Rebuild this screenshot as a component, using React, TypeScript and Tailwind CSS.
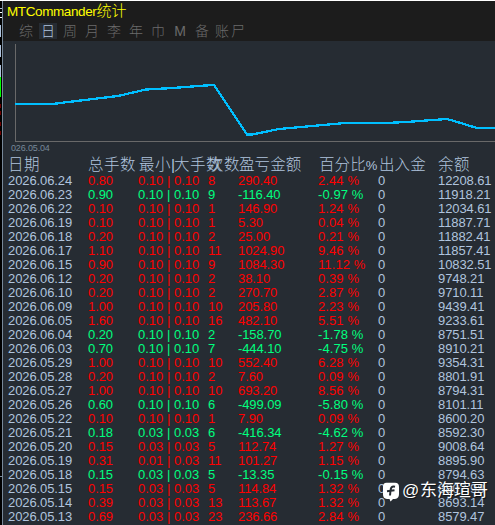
const rows: string[][] = [
  ["2026.06.24", "0.80", "0.10", "0.10", "8", "290.40", "2.44", "12208.61"],
  ["2026.06.23", "0.90", "0.10", "0.10", "9", "-116.40", "-0.97", "11918.21"],
  ["2026.06.22", "0.10", "0.10", "0.10", "1", "146.90", "1.24", "12034.61"],
  ["2026.06.19", "0.10", "0.10", "0.10", "1", "5.30", "0.04", "11887.71"],
  ["2026.06.18", "0.20", "0.10", "0.10", "2", "25.00", "0.21", "11882.41"],
  ["2026.06.17", "1.10", "0.10", "0.10", "11", "1024.90", "9.46", "11857.41"],
  ["2026.06.15", "0.90", "0.10", "0.10", "9", "1084.30", "11.12", "10832.51"],
  ["2026.06.12", "0.20", "0.10", "0.10", "2", "38.10", "0.39", "9748.21"],
  ["2026.06.10", "0.20", "0.10", "0.10", "2", "270.70", "2.87", "9710.11"],
  ["2026.06.09", "1.00", "0.10", "0.10", "10", "205.80", "2.23", "9439.41"],
  ["2026.06.05", "1.60", "0.10", "0.10", "16", "482.10", "5.51", "9233.61"],
  ["2026.06.04", "0.20", "0.10", "0.10", "2", "-158.70", "-1.78", "8751.51"],
  ["2026.06.03", "0.70", "0.10", "0.10", "7", "-444.10", "-4.75", "8910.21"],
  ["2026.05.29", "1.00", "0.10", "0.10", "10", "552.40", "6.28", "9354.31"],
  ["2026.05.28", "0.20", "0.10", "0.10", "2", "7.60", "0.09", "8801.91"],
  ["2026.05.27", "1.00", "0.10", "0.10", "10", "693.20", "8.56", "8794.31"],
  ["2026.05.26", "0.60", "0.10", "0.10", "6", "-499.09", "-5.80", "8101.11"],
  ["2026.05.22", "0.10", "0.10", "0.10", "1", "7.90", "0.09", "8600.20"],
  ["2026.05.21", "0.18", "0.03", "0.03", "6", "-416.34", "-4.62", "8592.30"],
  ["2026.05.20", "0.15", "0.03", "0.03", "5", "112.74", "1.27", "9008.64"],
  ["2026.05.19", "0.31", "0.01", "0.03", "11", "101.27", "1.15", "8895.90"],
  ["2026.05.18", "0.15", "0.03", "0.03", "5", "-13.35", "-0.15", "8794.63"],
  ["2026.05.15", "0.15", "0.03", "0.03", "5", "114.84", "1.32", "8807.98"],
  ["2026.05.14", "0.39", "0.03", "0.03", "13", "113.67", "1.32", "8693.14"],
  ["2026.05.13", "0.69", "0.03", "0.03", "23", "236.66", "2.84", "8579.47"],
];

const columns = "grid grid-cols-[80px_50px_70px_30px_80px_60px_60px_57px] whitespace-nowrap";

function Toolbar() {
  const tabs = ["综", "日", "周", "月", "李", "年", "巾", "M", "备"];
  return (
    <div className="flex h-4 w-[243px] pl-[13px] text-[14px] leading-4 text-[#6b6b6b]">
      {tabs.map((tab) => (
        <span
          key={tab}
          className={
            tab === "日"
              ? "mr-1 h-4 w-[18px] shrink-0 bg-[#262c33] text-center text-[#b0c4de]"
              : "mr-1 w-[18px] shrink-0 text-center"
          }
        >
          {tab}
        </span>
      ))}
      <span className="shrink-0 tracking-[2px]">账尸</span>
    </div>
  );
}

function Chart() {
  return (
    <svg className="block h-[101px] w-[491px] shrink-0" viewBox="4 41 491 101" shapeRendering="crispEdges">
      <path d="M15.5 44V142M15 141.5H495" fill="none" stroke="#696969" />
      <polyline
        points="15,104 53,104 60,103 118,96 146,89.5 173,88 205,85.5 214,85 247,134.5 252,134.5 279,129 345,123 386,123 406,122 447,119 454,121 477,128 495,128"
        fill="none"
        stroke="#00bfff"
        strokeWidth="2.3"
      />
    </svg>
  );
}

function Table() {
  return (
    <div className="pl-1 text-[13px] leading-[14px] tracking-[-0.1px] text-[#b0c4de]">
      <div className={`${columns} h-[19px] text-[15.5px] leading-[19px] tracking-[0.5px]`}>
        <span>日期</span>
        <span>总手数</span>
        <span className="pl-px">最小<span className="inline-block w-[3px] tracking-normal">|</span>大手数</span>
        <span>次数</span>
        <span className="pl-px tracking-[0.1px]">盈亏金额</span>
        <span className="pl-px tracking-[0.1px]">百分比<span className="text-[13px] tracking-normal">%</span></span>
        <span className="pl-px tracking-[0.1px]">出入金</span>
        <span>余额</span>
      </div>
      {rows.map(([date, lots, min, max, count, profit, percent, balance]) => (
        <div
          key={date}
          className={`${columns} h-[14px] ${profit.startsWith("-") ? "text-[#00ff7f]" : "text-[#ff0000]"}`}
        >
          <span className="text-[#b0c4de]">{date}</span>
          <span>{lots}</span>
          <span className="tracking-[0px]">{min} | {max}</span>
          <span>{count}</span>
          <span>{profit}</span>
          <span className="tracking-[0.1px]">{percent} %</span>
          <span className="text-[#b0c4de]">0</span>
          <span className="text-[#b0c4de]">{balance}</span>
        </div>
      ))}
    </div>
  );
}

function Watermark() {
  return (
    <div className="absolute top-[480px] left-[382px] flex items-center text-[17px] leading-[22px] font-normal text-white [text-shadow:1px_1px_1px_#0009]">
      <svg className="mt-0.5 mr-[2px] h-5 w-[18px] shrink-0" viewBox="0 0 18 20">
        <path d="M4.5.8H13Q17 .8 17 5V12Q17 16.5 13 17H11L8.5 19.5 7.5 17H5Q1 16.5 1 12.5V5Q1 .8 4.5.8Z" fill="white" />
        <path d="M13 4.8C9.8 3.9 8.8 5.5 8.5 8.5L8 13.5M5 9.2 12.5 8.3" fill="none" stroke="#262c33" strokeWidth="2" />
      </svg>
      <span className="w-[18px]">@</span>
      <span>东海瑄哥</span>
    </div>
  );
}

export default function App() {
  return (
    <div className="relative flex h-[525px] w-[495px] overflow-hidden bg-[#262c33] font-['Liberation_Sans','Noto_Sans_CJK_SC',sans-serif] font-light">
      <div className="flex w-[2px] shrink-0 flex-col bg-black">
        <div className="h-[25px] bg-[linear-gradient(#fff_1px,#000_1px_8px,#b0c4de_8px_9px,#000_9px_12px,#fff_12px_13px,#000_13px_17px,#fff_17px_18px,#000_18px)]" />
        <div className="h-3 w-px bg-[#b0c4de]" />
        <div className="mt-2 h-3 w-px bg-[#b0c4de]" />
        <div className="mt-2 h-3 w-px bg-[#b0c4de]" />
        <div className="h-5 w-px bg-[#00ff00]" />
        <div className="mt-[7px] h-1 w-px bg-[#700000]" />
        <div className="mt-[3px] h-1 w-px bg-[#700000]" />
        <div className="mt-[7px] h-1 w-px bg-[#700000]" />
        <div className="mt-[5px] h-1 w-px bg-[#700000]" />
        <div className="mt-[341px] h-px w-[2px] bg-[#778899]" />
      </div>
      <div className="flex w-[493px] shrink-0 flex-col border-t border-t-white">
        <div className="flex min-h-0 flex-1 flex-col border-l border-l-[#778899]">
          <div className="flex h-10 shrink-0 flex-col bg-[#1c1c1c] pl-px">
            <div className="h-[22px] pl-[3px] text-[13.5px] leading-[20px] tracking-[-0.4px] text-[#ffff00]">
              MTCommander<span className="text-[15px] tracking-normal">统计</span>
            </div>
            <Toolbar />
          </div>
          <div className="flex min-h-0 flex-1 flex-col pl-px">
            <Chart />
            <div className="h-[13px] shrink-0 pl-[7px] text-[9px] leading-[13px] tracking-[-0.15px] text-[#778899]">026.05.04</div>
            <Table />
          </div>
        </div>
      </div>
      <Watermark />
    </div>
  );
}
